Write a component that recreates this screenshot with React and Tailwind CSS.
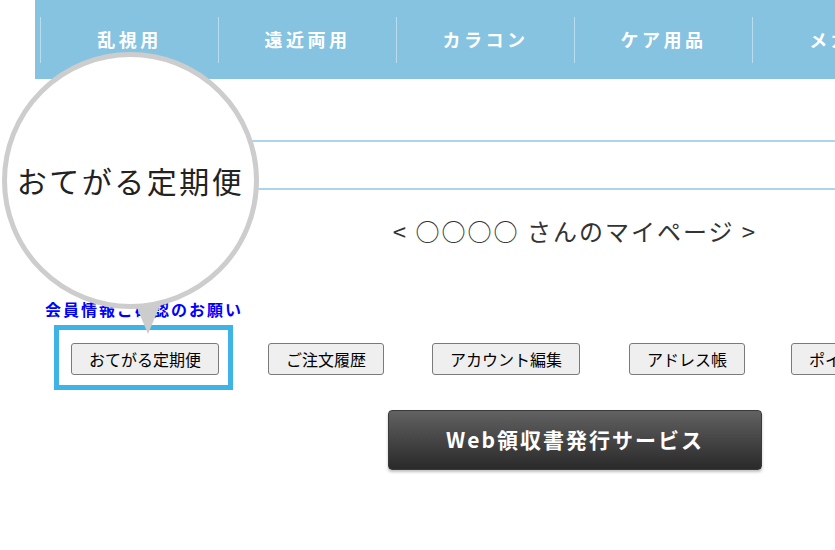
import React from 'react';

const navItems = ['乱視用', '遠近両用', 'カラコン', 'ケア用品', 'メガネ'];
const menuButtons = [
  { label: 'ご注文履歴', ml: 'ml-[35px]' },
  { label: 'アカウント編集', ml: 'ml-[48px]' },
  { label: 'アドレス帳', ml: 'ml-[49px]' },
  { label: 'ポイント', ml: 'ml-[46px]' },
];

const jp = { fontFamily: '"Noto Sans CJK JP", "Noto Sans", sans-serif' };

function MenuButton({ label }) {
  return (
    <button className="h-[32px] px-[17px] bg-[#efefef] border border-[#7a7a7a] rounded-[3px] text-[16px] leading-none text-black whitespace-nowrap shrink-0">
      {label}
    </button>
  );
}

export default function App() {
  return (
    <div className="relative w-[835px] h-[550px] overflow-hidden bg-white" style={jp}>
      <div className="ml-[35px] w-[1080px]">
        {/* Global nav */}
        <nav className="h-[79px] bg-[#86c3e1] flex items-center pl-[5px]">
          {navItems.map((item) => (
            <div
              key={item}
              className="w-[178px] h-[46px] shrink-0 border-l border-[#b9dcee] flex items-center justify-center text-white font-bold text-[18px] tracking-[3.5px]"
            >
              {item}
            </div>
          ))}
        </nav>

        {/* Title band */}
        <div className="mt-[61px] h-[50px] border-t-2 border-b-2 border-[#a9d5ee]" />

        <h1 className="mt-[26px] text-center text-[24px] leading-[30px] text-[#333] tracking-[2px]">
          &lt; ○○○○ さんのマイページ &gt;
        </h1>

        <p className="mt-[53px] pl-[10px] text-[16px] leading-[20px] font-bold text-[#0000ff] tracking-[2px]">
          会員情報ご確認のお願い
        </p>

        <div className="mt-[6px] flex items-start">
          <div className="ml-[19px] border-[5px] border-[#3db4e5] pl-[12px] pr-[9px] pt-[13px] pb-[10px] shrink-0">
            <MenuButton label="おてがる定期便" />
          </div>
          {menuButtons.map((b) => (
            <div key={b.label} className={`${b.ml} mt-[18px] shrink-0`}>
              <MenuButton label={b.label} />
            </div>
          ))}
        </div>

        <div className="mt-[20px] mx-auto w-[374px] h-[60px] rounded-[4px] border border-[#3a3a3a] bg-gradient-to-b from-[#626262] to-[#2a2a2a] shadow-[0_2px_3px_rgba(0,0,0,0.25)] flex items-center justify-center text-white font-bold text-[21px] tracking-[2px]">
          Web領収書発行サービス
        </div>
      </div>

      {/* Zoom callout */}
      <svg className="absolute left-[132px] top-[296px]" width="32" height="38" viewBox="0 0 32 38">
        <polygon points="0,0 32,0 16,38" fill="#cccccc" />
      </svg>
      <div className="absolute left-[2px] top-[52px] w-[257px] h-[257px] rounded-full border-[5px] border-[#cdcdcd] bg-white flex items-center justify-center">
        <span className="text-[30px] text-[#222] tracking-[2.5px] whitespace-nowrap">おてがる定期便</span>
      </div>
    </div>
  );
}
